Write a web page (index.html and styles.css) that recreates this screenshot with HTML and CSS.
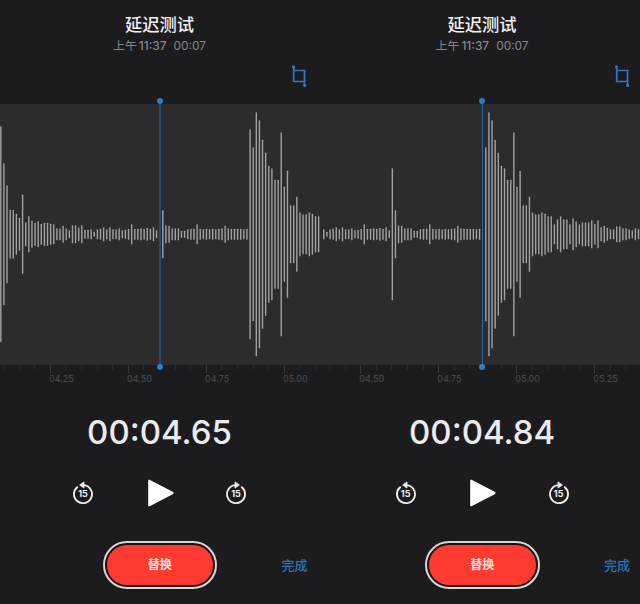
FILE: index.html
```html
<!DOCTYPE html>
<html lang="zh-CN">
<head>
    <meta charset="UTF-8">
    <title>延迟测试</title>
    <link rel="stylesheet" href="styles.css">
</head>
<body>
    <svg class="symbols" width="0" height="0">
        <symbol id="trim" viewBox="0 0 18 24">
            <path d="M3.7 3V17.5H14.5V21M3.7 6.5H14.5V17.5" fill="none" stroke="currentColor" stroke-width="1.7"/>
            <circle cx="3.5" cy="2.8" r="1.6" fill="currentColor"/>
            <circle cx="14.6" cy="21.3" r="1.6" fill="currentColor"/>
        </symbol>
        <symbol id="ring" viewBox="0 0 22 24">
            <path d="M10.5 4.1H11A9 9 0 1 1 5.2 6.2" fill="none" stroke="currentColor" stroke-width="1.9" stroke-linecap="round"/>
            <path d="M7.6 4L12 0.9V7.1Z" fill="currentColor" stroke="currentColor" stroke-width=".8" stroke-linejoin="round"/>
        </symbol>
        <symbol id="play" viewBox="0 0 28 30">
            <path d="M2.2 3V27Q2.2 29 4 28.1L26.7 16.2Q28.3 15 26.7 13.8L4 1.9Q2.2 1 2.2 3Z" fill="currentColor"/>
        </symbol>
    </svg>

    <div class="screens">
        <section class="recorder">
            <header class="header">
                <h1>延迟测试</h1>
                <p><span class="clock">上午<b>11:37</b></span><span>00:07</span></p>
            </header>
            <div class="toolbar"><svg class="trim"><use href="#trim"/></svg></div>
            <div class="wave">
                <svg class="bars" data-start="0"></svg>
                <div class="playhead"></div>
            </div>
            <div class="ruler ruler-a">
                <span>04.25</span><span>04.50</span><span>04.75</span><span>05.00</span>
            </div>
            <div class="time">00:04.65</div>
            <div class="controls">
                <button class="skip"><svg><use href="#ring"/></svg><span>15</span></button>
                <button class="play"><svg><use href="#play"/></svg></button>
                <button class="skip"><svg><use href="#ring"/></svg><span>15</span></button>
            </div>
            <footer class="footer">
                <button class="replace"><span>替换</span></button>
                <button class="done">完成</button>
            </footer>
        </section>

        <section class="recorder">
            <header class="header">
                <h1>延迟测试</h1>
                <p><span class="clock">上午<b>11:37</b></span><span>00:07</span></p>
            </header>
            <div class="toolbar"><svg class="trim"><use href="#trim"/></svg></div>
            <div class="wave">
                <svg class="bars" data-start="29"></svg>
                <div class="playhead playhead-bright"></div>
            </div>
            <div class="ruler ruler-b">
                <span>04.50</span><span>04.75</span><span>05.00</span><span>05.25</span>
            </div>
            <div class="time">00:04.84</div>
            <div class="controls">
                <button class="skip"><svg><use href="#ring"/></svg><span>15</span></button>
                <button class="play"><svg><use href="#play"/></svg></button>
                <button class="skip"><svg><use href="#ring"/></svg><span>15</span></button>
            </div>
            <footer class="footer">
                <button class="replace"><span>替换</span></button>
                <button class="done">完成</button>
            </footer>
        </section>
    </div>

    <script src="wave.js"></script>
</body>
</html>
```

FILE: styles.css
```css
* {
    box-sizing: border-box;
}
body {
    margin: 0;
    background: #1c1c1f;
    color: #fff;
    font-family: Inter, "Noto Sans CJK SC", sans-serif;
}
button {
    padding: 0;
    border: 0;
    background: none;
    color: inherit;
    font-family: inherit;
}
.symbols {
    display: none;
}
.screens {
    display: grid;
    grid-template-columns: 322.6px 322.6px;
    width: 640px;
    height: 604px;
    overflow: hidden;
}
.recorder {
    display: flex;
    flex-direction: column;
    min-width: 0;
    height: 604px;
}
.header {
    width: 319px;
    height: 64px;
    padding-top: 14px;
    text-align: center;
}
.header h1 {
    margin: 0;
    font-size: 17.3px;
    font-weight: 500;
    line-height: 22px;
    color: #f0f0f2;
}
.header p {
    display: flex;
    justify-content: center;
    gap: 7px;
    margin: 2px 0 0;
    font-size: 11.9px;
    line-height: 16px;
    color: #858588;
}
.header b {
    margin-left: 2px;
    font-weight: 500;
}
.toolbar {
    display: flex;
    justify-content: flex-end;
    height: 40px;
    padding-right: 14.6px;
}
.trim {
    width: 18px;
    height: 24px;
    color: #3178c0;
}
.wave {
    position: relative;
    height: 261px;
    background: #2c2c2f;
}
.bars {
    display: block;
    width: 100%;
    height: 261px;
    fill: #a2a2a6;
}
.playhead {
    position: absolute;
    top: -3px;
    left: 159px;
    width: 2px;
    height: 266px;
    background: #1f4f6e;
}
.playhead-bright {
    width: 1.4px;
    background: #2764a0;
}
.playhead::before,
.playhead::after {
    content: "";
    position: absolute;
    left: -2.3px;
    width: 6px;
    height: 6px;
    border-radius: 50%;
    background: #2c7cc9;
}
.playhead::before {
    top: -3px;
}
.playhead::after {
    bottom: -3px;
}
.ruler {
    display: flex;
    height: 42px;
    overflow: hidden;
    background: repeating-linear-gradient(90deg, #29292c 0 1px, transparent 1px 15.6px) 3px 0 / 100% 5px no-repeat;
}
.ruler-a {
    padding-left: 50px;
}
.ruler-b {
    padding-left: 37.7px;
    background-position-x: 6.5px;
}
.ruler span {
    flex: 0 0 78px;
    height: 8px;
    padding-top: 8px;
    border-left: 1px solid #38383b;
    font-size: 9px;
    line-height: 11px;
    text-indent: -2px;
    color: #4c4c50;
}
.time {
    width: 319px;
    height: 50px;
    font-size: 33px;
    font-weight: 500;
    line-height: 50px;
    text-align: center;
    color: #ececee;
}
.controls {
    display: flex;
    justify-content: space-between;
    align-items: center;
    width: 319px;
    height: 72px;
    padding: 0 72px;
}
.skip {
    display: grid;
    place-items: center;
    width: 22px;
    height: 24px;
    color: #ededee;
}
.skip svg,
.skip span {
    grid-area: 1 / 1;
}
.skip svg {
    width: 22px;
    height: 24px;
}
.skip span {
    padding-top: 2px;
    font-size: 9px;
    font-weight: 700;
    line-height: 12px;
}
.skip:last-child svg {
    transform: scaleX(-1);
}
.play svg {
    display: block;
    width: 28px;
    height: 30px;
}
.footer {
    display: flex;
    align-items: center;
    height: 48px;
    margin-top: 12px;
    padding-left: 102.5px;
}
.replace {
    width: 114.5px;
    height: 48px;
    padding: 2px;
    border: 2px solid #ddd5d2;
    border-radius: 24px;
    background: #1b1011;
}
.replace span {
    display: block;
    border-radius: 20px;
    background: #fe3b30;
    font-size: 12px;
    font-weight: 700;
    line-height: 40px;
    color: #ffe9e4;
}
.done {
    margin-left: 64.5px;
    font-size: 13px;
    font-weight: 500;
    line-height: 20px;
    text-align: center;
    color: #2574bd;
}
```

FILE: wave.js
```javascript
// half heights of the recorded samples
const samples = [
    108, 71, 49, 24.5, 24.5, 20.5, 16.5, 39.5, 12, 18, 13.5, 11.5, 13, 10.5, 11.5, 11.5, 10.5, 10, 6, 6,
    8.5, 6, 4, 9, 9, 7, 9, 4.5, 4.5, 5, 2.5, 5, 5.5, 7, 5, 7, 5, 5, 6, 4,
    4.5, 5.5, 10, 5.5, 5.5, 6, 5.5, 6.5, 5.5, 7, 4, 66, 24, 9, 8.5, 6, 6, 6, 3.5, 3.5,
    5, 5.5, 5.5, 10, 5.5, 5, 5.5, 5, 5.5, 5, 5.5, 6, 8.5, 6, 5.5, 5.5, 5.5, 5.5, 5, 5.5,
    105, 87, 122, 114, 94.5, 81.5, 68.5, 66, 54.5, 54.5, 102, 47.5, 63.5, 29, 29, 37.5, 22, 20, 20, 22,
    20.5, 18, 18, 10, 15, 18, 15, 15, 10, 16, 13, 10, 12, 12, 12, 14, 10.5, 14, 7, 8.5,
    6.5, 5, 5, 8, 8, 6, 6, 5, 4, 6, 5, 5
];
const PITCH = 3.116;
const PLAYHEAD = 51;
const COUNT = 103;
const MIDDLE = 130.3;

document.querySelectorAll('.bars').forEach(function(svg) {
    const start = Number(svg.dataset.start);
    for (let i = 0; i < COUNT; i++) {
        if (i === PLAYHEAD) continue;
        const half = samples[start + i];
        const bar = document.createElementNS('http://www.w3.org/2000/svg', 'rect');
        bar.setAttribute('x', (0.1 + i * PITCH).toFixed(2));
        bar.setAttribute('y', MIDDLE - half);
        bar.setAttribute('width', 1.4);
        bar.setAttribute('height', half * 2);
        bar.setAttribute('rx', 0.5);
        svg.appendChild(bar);
    }
});
```
